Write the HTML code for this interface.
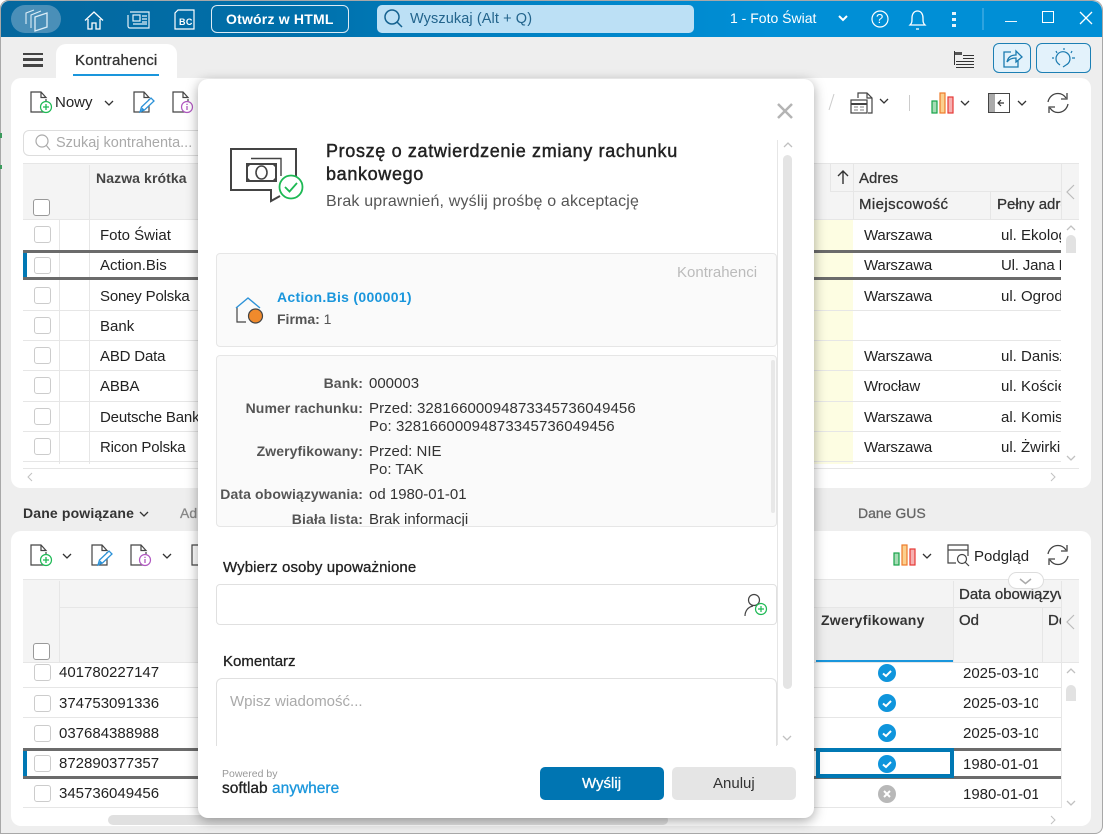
<!DOCTYPE html>
<html lang="pl"><head><meta charset="utf-8"><title>Kontrahenci</title>
<style>
html,body{margin:0;padding:0;background:#fff}
#w{position:relative;width:1103px;height:834px;overflow:hidden;background:#eee;font-family:"Liberation Sans",sans-serif;font-size:15px;color:#222;box-sizing:border-box;border-radius:8px 10px 8px 0;box-shadow:inset 0 0 0 1px #a8a8a8}
#w div,#w span,#w svg{position:absolute}
#w span{white-space:nowrap;line-height:18px}
#w .b,#w .k{line-height:16px}
.m{-webkit-text-stroke:.3px}
.b{font-weight:700;font-size:14px}
.n{letter-spacing:-.18px}
.hl{background:#e6e6e6;height:1px}
.vl{background:#e6e6e6;width:1px}
.cb{width:15px;height:15px;border:1px solid #ccc;border-radius:3px;background:#fff}
.hb{border-color:#999}
svg{overflow:visible}
</style></head><body><div id="w">
<svg width="0" height="0" style="position:absolute"><defs>
<symbol id="doc" viewBox="0 0 22 22" overflow="visible"><path d="M16 8V21H1V1H11L16 6.500H11V1" fill="none" stroke="#444" stroke-width="1.200"/></symbol>
<symbol id="add" viewBox="0 0 22 22" overflow="visible"><use href="#doc"/><circle cx="16" cy="16" r="5.500" fill="#fff" stroke="#1db954" stroke-width="1.200"/><path d="M16 13v6M13 16h6" stroke="#1db954" stroke-width="1.300"/></symbol>
<symbol id="edit" viewBox="0 0 22 22" overflow="visible"><use href="#doc"/><path d="M7 21l1.500-5L18 7l3 3-9.500 9z" fill="#fff" stroke="#2c92d8" stroke-width="1.300"/><path d="M8 20.500l1-4 3 2.500z" fill="#2c92d8"/></symbol>
<symbol id="info" viewBox="0 0 22 22" overflow="visible"><use href="#doc"/><circle cx="15" cy="16" r="5.500" fill="#fff" stroke="#b058c0" stroke-width="1.200"/><path d="M15 15v4M15 12.800v1.200" stroke="#b058c0" stroke-width="1.300"/></symbol>
<symbol id="chart" viewBox="0 0 22 22" overflow="visible"><rect x="1" y="9" width="5" height="12" fill="#a6dcb5" stroke="#17a34a" stroke-width="1.200"/><rect x="9" y="1" width="5" height="20" fill="#fbd08e" stroke="#ee7b2a" stroke-width="1.200"/><rect x="17" y="5" width="5" height="16" fill="#f6b0b0" stroke="#e53935" stroke-width="1.200"/></symbol>
<symbol id="ref" viewBox="0 0 22 22" overflow="visible"><path d="M1 10C2 5 6 1.500 11 1.500c3.500 0 6 1.500 8 4.500M21 12c-1 5-5 8.500-10 8.500-3.500 0-6-1.500-8-4.500" fill="none" stroke="#444" stroke-width="1.300"/><path d="M20 1v6h-6M2 21v-6h6" fill="none" stroke="#444" stroke-width="1.300"/></symbol>
<symbol id="chev" viewBox="0 0 10 6" overflow="visible"><path d="M1 1l4 4 4-4" fill="none" stroke="#333" stroke-width="1.300"/></symbol>
<symbol id="ok" viewBox="0 0 18 18"><circle cx="9" cy="9" r="9" fill="#0f95dc"/><path d="M5 9.500l3 2.500 5-5" fill="none" stroke="#fff" stroke-width="2"/></symbol>
<symbol id="no" viewBox="0 0 18 18"><circle cx="9" cy="9" r="9" fill="#b8b8b8"/><path d="M6 6l6 6M12 6l-6 6" fill="none" stroke="#fff" stroke-width="2"/></symbol>
</defs></svg>

<!-- title bar -->
<div style="left:1px;top:1px;width:1101px;height:36px;border-radius:8px 10px 0 0;background:linear-gradient(90deg,#05679e 0,#006fa9 25%,#0083c6 50%,#008fd6 70%,#008fd6 100%)"></div>
<div style="left:11px;top:5px;width:50px;height:28px;border-radius:14px;background:#4a8fb8"></div>
<svg style="left:25px;top:9px" width="23" height="23" fill="none" stroke="#dcedf7" stroke-width="1.100"><path d="M1 15V4L9 1"/><path d="M6 19V6L16 2"/><path d="M10 8L22 4V18L10 22z" fill="#4a8fb8" stroke-width="1.300"/></svg>
<svg style="left:85px;top:11px" width="18" height="18" fill="none" stroke="#fff" stroke-width="1.300"><path d="M0 9.500L9 1l9 8.500M3 8v10h4v-6h4v6h4V8"/></svg>
<svg style="left:127px;top:11px" width="23" height="18" fill="none" stroke="#e3f1f9" stroke-width="1.200"><path d="M3 1H22V17H3a2 2 0 0 1-2-2V4"/><rect x="6" y="4" width="7" height="6"/><path d="M15 5h5M15 8h5M15 11h5M6 13h14"/></svg>
<svg style="left:174px;top:9px" width="21" height="21" fill="none" stroke="#fff" stroke-width="1.200"><path d="M1 4V20H20V1H4z"/></svg>
<span class="b" style="left:179px;top:14px;font-size:9px;color:#fff;letter-spacing:.4px">BC</span>
<div style="left:211px;top:5px;width:136px;height:26px;border:1px solid #dcebf4;border-radius:6px"></div>
<span class="b" style="left:226px;top:11px;color:#fff;font-size:14px;letter-spacing:.2px">Otwórz w HTML</span>
<div style="left:377px;top:5px;width:317px;height:28px;border-radius:5px;background:#bce0f5"></div>
<svg style="left:384px;top:9px" width="19" height="19" fill="none" stroke="#14618f" stroke-width="1.500"><circle cx="8" cy="8" r="7"/><path d="M13 13l5 5"/></svg>
<span style="left:410px;top:10px;color:#22648c;font-size:14.500px;letter-spacing:.1px">Wyszukaj (Alt + Q)</span>
<span class="k" style="left:730px;top:10px;color:#fff;font-size:14px">1 - Foto Świat</span>
<svg style="left:838px;top:15px" width="10" height="7"><path d="M1 1l4 4 4-4" fill="none" stroke="#fff" stroke-width="2"/></svg>
<svg style="left:871px;top:10px" width="18" height="18" fill="none" stroke="#fff" stroke-width="1.200"><circle cx="9" cy="9" r="8"/></svg>
<span class="k" style="left:876px;top:11px;color:#fff;font-size:13px">?</span>
<svg style="left:909px;top:8px" width="17" height="22" fill="none" stroke="#fff" stroke-width="1.300"><path d="M1 17c2-2 2-3 2-7 0-4 2-7 5.500-7S14 6 14 10c0 4 0 5 2 7z"/><path d="M7 21h3"/></svg>
<svg style="left:952px;top:11px" width="4" height="16" fill="#e6f3fb"><rect y="1" width="4" height="3"/><rect y="7" width="4" height="3"/><rect y="13" width="4" height="3"/></svg>
<div style="left:982px;top:8px;width:2px;height:22px;background:#2ea3df"></div>
<div style="left:1005px;top:21px;width:12px;height:1px;background:#eaf6fd"></div>
<div style="left:1042px;top:11px;width:10px;height:10px;border:1.500px solid #fff"></div>
<svg style="left:1080px;top:12px" width="12" height="12" stroke="#fff" stroke-width="1.300"><path d="M0 0l12 12M12 0L0 12"/></svg>

<!-- tab row -->
<div style="left:23px;top:53px;width:20px;height:2px;background:#444"></div>
<div style="left:23px;top:58px;width:20px;height:3px;background:#444"></div>
<div style="left:23px;top:64px;width:20px;height:3px;background:#444"></div>
<div style="left:56px;top:44px;width:121px;height:36px;background:#fff;border-radius:10px 10px 0 0"></div>
<span class="m" style="left:75px;top:52px;color:#333;letter-spacing:.22px">Kontrahenci</span>
<div style="left:73px;top:74px;width:86px;height:2px;background:#1a96dc"></div>
<svg style="left:953px;top:51px" width="21" height="18" fill="none" stroke="#333" stroke-width="1"><path d="M1.500 0v14"/><rect x="2" y="1" width="7" height="3" fill="#555" stroke="none"/><path d="M10 4.500h11M10 7.500h11M3 10.500h18M3 13.500h18M3 16.500h18"/></svg>
<div style="left:993px;top:43px;width:36px;height:28px;border:1px solid #1c7fb4;border-radius:6px;background:#e3f2fb"></div>
<svg style="left:1003px;top:49px" width="20" height="20" fill="none" stroke="#1b7bb0" stroke-width="1.300"><path d="M8 3H1v15h14v-6"/><path d="M4 13c1-5 4-7 9-7V2l6 6-6 5V9c-4 0-7 1-9 4z"/></svg>
<div style="left:1036px;top:43px;width:53px;height:28px;border:1px solid #1c7fb4;border-radius:6px;background:#e3f2fb"></div>
<svg style="left:1051px;top:47px" width="26" height="22" fill="none" stroke="#1b7bb0" stroke-width="1.200"><path d="M9 18c-3-2-4-4-4-6a7 7 0 1 1 10 6l-3 2"/><path d="M1 11h2M21 11h3M13 1v2M5 4l1 2M21 4l-1 2"/></svg>

<!-- top panel -->
<div style="left:11px;top:78px;width:1080px;height:410px;background:#fff;border-radius:10px"></div>
<svg style="left:30px;top:91px" width="22" height="22"><use href="#add"/></svg>
<span style="left:55px;top:94px">Nowy</span>
<svg style="left:104px;top:100px" width="10" height="6"><use href="#chev"/></svg>
<svg style="left:133px;top:91px" width="22" height="22"><use href="#edit"/></svg>
<svg style="left:172px;top:91px" width="22" height="22"><use href="#info"/></svg>
<svg style="left:827px;top:93px" width="8" height="18"><path d="M7 1L2 17" stroke="#ccc"/></svg>
<svg style="left:850px;top:92px" width="23" height="22" fill="none" stroke="#444" stroke-width="1.200"><path d="M8 6V1h9l5 5v15h-4"/><path d="M17 1v5h5"/><rect x="1" y="8" width="16" height="13" fill="#fff"/><path d="M1 12h16" stroke-width="2"/><path d="M4 15h4M10 15h4M4 18h4M10 18h4" stroke="#999"/></svg>
<svg style="left:879px;top:98px" width="10" height="6"><use href="#chev"/></svg>
<div style="left:909px;top:95px;width:1px;height:16px;background:#ccc"></div>
<svg style="left:931px;top:92px" width="22" height="22"><use href="#chart"/></svg>
<svg style="left:960px;top:100px" width="10" height="6"><use href="#chev"/></svg>
<svg style="left:988px;top:93px" width="22" height="20"><rect x=".5" y=".5" width="21" height="19" fill="#fff" stroke="#444"/><rect x="1" y="1" width="6" height="18" fill="#aaa"/><path d="M16 10H10M13 7l-3 3 3 3" fill="none" stroke="#333" stroke-width="1.200"/></svg>
<svg style="left:1017px;top:100px" width="10" height="6"><use href="#chev"/></svg>
<svg style="left:1047px;top:92px" width="22" height="22"><use href="#ref"/></svg>

<div style="left:23px;top:130px;width:180px;height:24px;border:1px solid #ddd;border-radius:6px;background:#fff"></div>
<svg style="left:35px;top:134px" width="16" height="17" fill="none" stroke="#aaa" stroke-width="1.200"><circle cx="7" cy="7" r="6"/><path d="M11 11l4 5"/></svg>
<span style="left:56px;top:134px;color:#aaa;font-size:14.500px">Szukaj kontrahenta...</span>

<!-- top table -->
<div style="left:23px;top:163px;width:1056px;height:57px;background:#f4f4f4;border-top:1px solid #e6e6e6;box-sizing:border-box"></div>
<div class="vl" style="left:89px;top:165px;height:55px"></div>
<div class="hl" style="left:23px;top:219px;width:1056px"></div>
<div class="cb hb" style="left:33px;top:199px"></div>
<span class="b" style="left:96px;top:170px;color:#444;letter-spacing:.1px">Nazwa krótka</span>
<div class="vl" style="left:830px;top:164px;height:28px"></div>
<div class="vl" style="left:853px;top:164px;height:55px"></div>
<div class="hl" style="left:830px;top:191px;width:231px"></div>
<div class="vl" style="left:990px;top:192px;height:27px"></div>
<div class="vl" style="left:1061px;top:164px;height:55px"></div>
<svg style="left:837px;top:170px" width="12" height="14" fill="none" stroke="#333" stroke-width="1.400"><path d="M6 14V1M1 6l5-5 5 5"/></svg>
<span class="m" style="left:859px;top:170px;color:#333">Adres</span>
<span class="m" style="left:859px;top:196px;color:#333;letter-spacing:.4px">Miejscowość</span>
<span class="m" style="left:997px;top:196px;color:#333;width:64px;overflow:hidden">Pełny adres</span>
<svg style="left:1066px;top:184px" width="9" height="16" fill="none" stroke="#bbb" stroke-width="1.200"><path d="M8 1L1 8l7 7"/></svg>

<div style="left:814px;top:220px;width:39px;height:244px;background:#fdfde2"></div>
<div class="hl" style="left:23px;top:310px;width:1038px"></div>
<div class="hl" style="left:23px;top:340px;width:1038px"></div>
<div class="hl" style="left:23px;top:370px;width:1038px"></div>
<div class="hl" style="left:23px;top:401px;width:1038px"></div>
<div class="hl" style="left:23px;top:431px;width:1038px"></div>
<div class="hl" style="left:23px;top:461px;width:1038px"></div>
<div class="vl" style="left:59px;top:220px;height:244px"></div>
<div class="vl" style="left:89px;top:220px;height:244px"></div>
<div style="left:23px;top:250px;width:1038px;height:3px;background:#6b6b6b"></div>
<div style="left:23px;top:277px;width:1038px;height:3px;background:#6b6b6b"></div>
<div style="left:23px;top:253px;width:4px;height:24px;background:#0078b4"></div>
<div class="cb" style="left:34px;top:226px"></div>
<div class="cb" style="left:34px;top:257px"></div>
<div class="cb" style="left:34px;top:287px"></div>
<div class="cb" style="left:34px;top:317px"></div>
<div class="cb" style="left:34px;top:347px"></div>
<div class="cb" style="left:34px;top:377px"></div>
<div class="cb" style="left:34px;top:408px"></div>
<div class="cb" style="left:34px;top:438px"></div>
<span style="left:100px;top:227px">Foto Świat</span>
<span style="left:100px;top:257px">Action.Bis</span>
<span class="n" style="left:100px;top:288px">Soney Polska</span>
<span style="left:100px;top:318px">Bank</span>
<span class="n" style="left:100px;top:348px">ABD Data</span>
<span class="n" style="left:100px;top:378px">ABBA</span>
<span class="n" style="left:100px;top:409px;width:98px;overflow:hidden">Deutsche Bank</span>
<span class="n" style="left:100px;top:439px">Ricon Polska</span>
<span class="n" style="left:864px;top:227px">Warszawa</span>
<span class="n" style="left:864px;top:257px">Warszawa</span>
<span class="n" style="left:864px;top:288px">Warszawa</span>
<span class="n" style="left:864px;top:348px">Warszawa</span>
<span class="n" style="left:864px;top:378px">Wrocław</span>
<span class="n" style="left:864px;top:409px">Warszawa</span>
<span class="n" style="left:864px;top:439px">Warszawa</span>
<span style="left:1001px;top:227px;width:60px;overflow:hidden">ul. Ekologiczna</span>
<span class="n" style="left:1001px;top:257px;width:60px;overflow:hidden">Ul. Jana Pawła</span>
<span style="left:1001px;top:288px;width:60px;overflow:hidden">ul. Ogrodowa</span>
<span style="left:1001px;top:348px;width:60px;overflow:hidden">ul. Daniszewska</span>
<span style="left:1001px;top:378px;width:60px;overflow:hidden">ul. Kościelna</span>
<span style="left:1001px;top:409px;width:60px;overflow:hidden">al. Komisji</span>
<span style="left:1001px;top:439px;width:60px;overflow:hidden">ul. Żwirki</span>
<svg style="left:1066px;top:225px" width="10" height="6"><use href="#chev" transform="rotate(180 5 3)" opacity=".3"/></svg>
<div style="left:1066px;top:235px;width:10px;height:18px;border-radius:5px 5px 0 0;background:#e2e2e2"></div>
<svg style="left:1066px;top:455px" width="10" height="6" opacity=".3"><use href="#chev"/></svg>
<svg style="left:27px;top:472px" width="6" height="10" opacity=".3"><path d="M5 1L1 5l4 4" fill="none" stroke="#333"/></svg>
<svg style="left:1050px;top:472px" width="6" height="10" opacity=".3"><path d="M1 1l4 4-4 4" fill="none" stroke="#333"/></svg>
<div class="hl" style="left:23px;top:468px;width:1056px"></div>

<!-- tabs between -->
<span class="b" style="left:23px;top:505px;color:#333;font-size:14px;letter-spacing:.15px">Dane powiązane</span>
<svg style="left:139px;top:511px" width="10" height="6"><use href="#chev"/></svg>
<span class="m k" style="left:180px;top:505px;color:#888;font-size:14px">Ad</span>
<span class="m k" style="left:858px;top:505px;color:#666;font-size:14px">Dane GUS</span>

<!-- bottom panel -->
<div style="left:11px;top:531px;width:1080px;height:295px;background:#fff;border-radius:10px"></div>
<svg style="left:30px;top:544px" width="22" height="22"><use href="#add"/></svg>
<svg style="left:62px;top:553px" width="10" height="6"><use href="#chev"/></svg>
<svg style="left:91px;top:544px" width="22" height="22"><use href="#edit"/></svg>
<svg style="left:130px;top:544px" width="22" height="22"><use href="#info"/></svg>
<svg style="left:162px;top:553px" width="10" height="6"><use href="#chev"/></svg>
<svg style="left:191px;top:544px" width="22" height="22"><use href="#doc"/></svg>
<svg style="left:893px;top:544px" width="22" height="22"><use href="#chart"/></svg>
<svg style="left:922px;top:553px" width="10" height="6"><use href="#chev"/></svg>
<svg style="left:947px;top:544px" width="22" height="22" fill="none" stroke="#444" stroke-width="1.200"><path d="M9 19H1V1h20v11M1 6h20" /><circle cx="15" cy="15" r="4.500"/><path d="M18 18l4 4"/></svg>
<span style="left:974px;top:548px">Podgląd</span>
<svg style="left:1047px;top:544px" width="22" height="22"><use href="#ref"/></svg>

<!-- bottom table -->
<div style="left:23px;top:579px;width:1056px;height:84px;background:#f4f4f4;border-top:1px solid #e6e6e6;box-sizing:border-box"></div>
<div class="vl" style="left:59px;top:581px;height:81px"></div>
<div class="hl" style="left:59px;top:607px;width:1002px"></div>
<div class="hl" style="left:23px;top:662px;width:1056px"></div>
<div class="cb hb" style="left:33px;top:643px"></div>
<div style="left:816px;top:608px;width:138px;height:52px;background:#eee"></div>
<div style="left:816px;top:660px;width:138px;height:2px;background:#1a96dc"></div>
<span class="b" style="left:821px;top:612px;color:#333;letter-spacing:.25px">Zweryfikowany</span>
<div class="vl" style="left:953px;top:581px;height:81px"></div>
<div class="vl" style="left:1042px;top:608px;height:54px"></div>
<div class="vl" style="left:1061px;top:581px;height:81px"></div>
<span class="m" style="left:959px;top:586px;color:#333;width:102px;overflow:hidden">Data obowiązywania</span>
<span class="m" style="left:959px;top:612px;color:#333">Od</span>
<span class="m" style="left:1048px;top:612px;color:#333;width:13px;overflow:hidden">Do</span>
<div style="left:1008px;top:572px;width:34px;height:15px;background:#fff;border:1px solid #ddd;border-radius:9px"></div>
<svg style="left:1019px;top:578px" width="13" height="7" fill="none" stroke="#aaa" stroke-width="1.500"><path d="M1 1l5.500 4.500L12 1"/></svg>
<svg style="left:1066px;top:614px" width="9" height="16" fill="none" stroke="#bbb" stroke-width="1.200"><path d="M8 1L1 8l7 7"/></svg>

<div class="hl" style="left:23px;top:687px;width:1038px"></div>
<div class="hl" style="left:23px;top:717px;width:1038px"></div>
<div class="hl" style="left:23px;top:807px;width:1038px"></div>
<div style="left:23px;top:748px;width:1038px;height:3px;background:#6b6b6b"></div>
<div style="left:23px;top:776px;width:1038px;height:3px;background:#6b6b6b"></div>
<div style="left:23px;top:751px;width:4px;height:25px;background:#0078b4"></div>
<div style="left:816px;top:748px;width:130px;height:22px;border:4px solid #0078b4;background:#fff"></div>
<div class="cb" style="left:34px;top:664px"></div>
<div class="cb" style="left:34px;top:695px"></div>
<div class="cb" style="left:34px;top:725px"></div>
<div class="cb" style="left:34px;top:755px"></div>
<div class="cb" style="left:34px;top:785px"></div>
<span style="left:59px;top:664px">401780227147</span>
<span style="left:59px;top:695px">374753091336</span>
<span style="left:59px;top:725px">037684388988</span>
<span style="left:59px;top:755px">872890377357</span>
<span style="left:59px;top:785px">345736049456</span>
<svg style="left:878px;top:664px" width="18" height="18"><use href="#ok"/></svg>
<svg style="left:878px;top:694px" width="18" height="18"><use href="#ok"/></svg>
<svg style="left:878px;top:724px" width="18" height="18"><use href="#ok"/></svg>
<svg style="left:878px;top:755px" width="18" height="18"><use href="#ok"/></svg>
<svg style="left:878px;top:785px" width="18" height="18"><use href="#no"/></svg>
<span style="left:963px;top:665px;width:75px;overflow:hidden">2025-03-10</span>
<span style="left:963px;top:695px;width:75px;overflow:hidden">2025-03-10</span>
<span style="left:963px;top:725px;width:75px;overflow:hidden">2025-03-10</span>
<span style="left:963px;top:756px;width:75px;overflow:hidden">1980-01-01</span>
<span style="left:963px;top:786px;width:75px;overflow:hidden">1980-01-01</span>
<svg style="left:1066px;top:668px" width="10" height="6" opacity=".3"><use href="#chev" transform="rotate(180 5 3)"/></svg>
<div style="left:1066px;top:685px;width:10px;height:16px;border-radius:5px 5px 0 0;background:#e2e2e2"></div>
<svg style="left:1066px;top:800px" width="10" height="6" opacity=".3"><use href="#chev"/></svg>
<svg style="left:1050px;top:815px" width="6" height="10" opacity=".3"><path d="M1 1l4 4-4 4" fill="none" stroke="#333"/></svg>
<div style="left:108px;top:815px;width:560px;height:10px;border-radius:5px;background:#e0e0e0"></div>
<div class="vl" style="left:1061px;top:663px;height:145px"></div>
<div style="left:0;top:133px;width:2px;height:5px;background:#3a9a5c"></div>
<div style="left:0;top:165px;width:2px;height:4px;background:#3a9a5c"></div>

<!-- modal -->
<div style="left:198px;top:79px;width:616px;height:739px;background:#fff;border-radius:10px;box-shadow:0 3px 12px rgba(0,0,0,.35)"></div>
<svg style="left:777px;top:103px" width="16" height="16" stroke="#b4b4b4" stroke-width="2.500"><path d="M1 1l14 14M15 1L1 15"/></svg>
<svg style="left:230px;top:148px" width="74" height="55" fill="none" stroke="#444"><path d="M66 30V1H1V42H41V53L50 48" stroke-width="2"/><rect x="17" y="16" width="29" height="17" stroke-width="2"/><path d="M21 10.500H51V28" stroke-width="1.400"/><path d="M17 16h4l-4 4zM46 16h-4l4 4zM17 33h4l-4-4zM46 33h-4l4-4z" fill="#444" stroke="none"/><ellipse cx="31.500" cy="24.500" rx="5.500" ry="6.500" stroke-width="1.600"/><circle cx="61" cy="39" r="11.500" fill="#fff" stroke="#1db954" stroke-width="1.800"/><path d="M55 39l4.500 4.500L67 35" stroke="#1db954" stroke-width="1.800"/></svg>
<span class="m k" style="left:326px;top:143px;font-size:18px;color:#222;letter-spacing:.65px;-webkit-text-stroke:.45px">Proszę o zatwierdzenie zmiany rachunku</span>
<span class="m k" style="left:326px;top:166px;font-size:18px;color:#222;letter-spacing:.65px;-webkit-text-stroke:.45px">bankowego</span>
<span class="k" style="left:326px;top:194px;font-size:16px;color:#555;letter-spacing:.17px">Brak uprawnień, wyślij prośbę o akceptację</span>

<div style="left:216px;top:253px;width:559px;height:92px;background:#fafafa;border:1px solid #e6e6e6;border-radius:4px"></div>
<span style="left:677px;top:264px;color:#bbb">Kontrahenci</span>
<svg style="left:235px;top:296px" width="30" height="30" fill="none"><path d="M2 11V26H11" stroke="#444" stroke-width="1.200"/><path d="M1 12L13 2l12 10" stroke="#2c92d8" stroke-width="1.400"/><circle cx="20.500" cy="20" r="7" fill="#f08a2c" stroke="#444" stroke-width="1.200"/></svg>
<span class="b" style="left:277px;top:289px;color:#1a96dc;letter-spacing:.3px">Action.Bis (000001)</span>
<span class="k" style="left:277px;top:311px;color:#555;font-size:14px"><b>Firma:</b> 1</span>

<div style="left:216px;top:355px;width:559px;height:170px;background:#fafafa;border:1px solid #e6e6e6;border-radius:4px"></div>
<div style="left:771px;top:360px;width:4px;height:153px;border-radius:2px;background:#e8e8e8"></div>
<span class="b" style="right:740px;top:375px;color:#555;letter-spacing:.1px">Bank:</span>
<span style="left:369px;top:375px;color:#333">000003</span>
<span class="b" style="right:740px;top:400px;color:#555;letter-spacing:.1px">Numer rachunku:</span>
<span style="left:369px;top:400px;color:#333;letter-spacing:.07px">Przed: 32816600094873345736049456</span>
<span style="left:369px;top:418px;color:#333;letter-spacing:.07px">Po: 32816600094873345736049456</span>
<span class="b" style="right:740px;top:443px;color:#555;letter-spacing:.1px">Zweryfikowany:</span>
<span style="left:369px;top:443px;color:#333">Przed: NIE</span>
<span style="left:369px;top:461px;color:#333">Po: TAK</span>
<span class="b" style="right:740px;top:486px;color:#555;letter-spacing:.1px">Data obowiązywania:</span>
<span style="left:369px;top:486px;color:#333">od 1980-01-01</span>
<span class="b" style="right:740px;top:511px;color:#555;letter-spacing:.1px">Biała lista:</span>
<span style="left:369px;top:511px;color:#333;height:15px;overflow:hidden">Brak informacji</span>

<div class="vl" style="left:777px;top:140px;height:605px"></div>
<div style="left:783px;top:155px;width:9px;height:534px;border-radius:5px;background:#e4e4e4"></div>
<svg style="left:783px;top:142px" width="10" height="6" opacity=".3"><use href="#chev" transform="rotate(180 5 3)"/></svg>
<svg style="left:782px;top:735px" width="10" height="6" opacity=".3"><use href="#chev"/></svg>

<span class="m" style="left:223px;top:559px;color:#222;letter-spacing:.1px">Wybierz osoby upoważnione</span>
<div style="left:216px;top:584px;width:559px;height:39px;background:#fff;border:1px solid #e0e0e0;border-radius:4px"></div>
<svg style="left:744px;top:593px" width="24" height="24" fill="none"><circle cx="10" cy="7" r="5.500" stroke="#444" stroke-width="1.200"/><path d="M1 23c0-5 3-9 8-10" stroke="#444" stroke-width="1.200"/><circle cx="17" cy="16" r="5.500" fill="#fff" stroke="#1db954" stroke-width="1.200"/><path d="M17 13v6M14 16h6" stroke="#1db954" stroke-width="1.200"/></svg>
<span class="m" style="left:223px;top:653px;color:#222">Komentarz</span>
<div style="left:216px;top:678px;width:559px;height:67px;background:#fff;border:1px solid #e0e0e0;border-bottom:0;border-radius:6px 6px 0 0"></div>
<span style="left:230px;top:693px;color:#aaa">Wpisz wiadomość...</span>

<span class="k" style="left:222px;top:766px;color:#999;font-size:10.500px">Powered by</span>
<span class="m" style="left:222px;top:780px;color:#222;font-size:15.500px">softlab <span style="position:static;color:#1a96dc">anywhere</span></span>
<div style="left:540px;top:767px;width:124px;height:33px;background:#0075b2;border-radius:5px"></div>
<span class="m" style="left:582px;top:775px;color:#fff">Wyślij</span>
<div style="left:672px;top:767px;width:124px;height:33px;background:#e5e5e5;border-radius:5px"></div>
<span style="left:713px;top:775px;color:#333">Anuluj</span>
</div></body></html>
